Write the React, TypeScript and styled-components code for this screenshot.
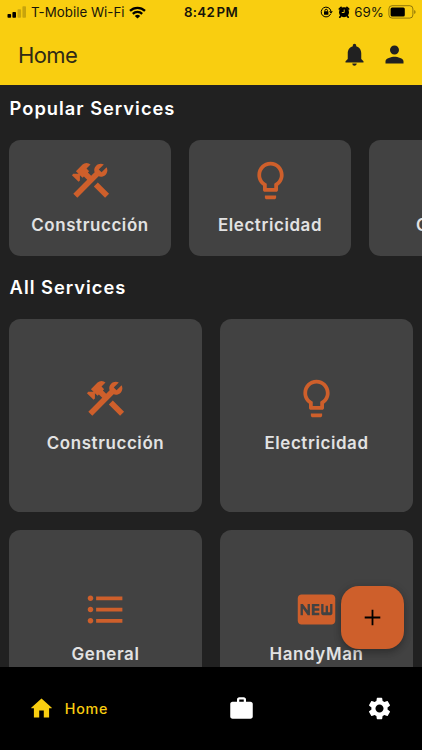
import React from "react";
import styled, { createGlobalStyle } from "styled-components";
import {
  MdConstruction,
  MdFiberNew,
  MdFormatListBulleted,
  MdLightbulbOutline,
  MdNotifications,
  MdPerson,
  MdSettings,
  MdWork,
} from "react-icons/md";
import type { IconType } from "react-icons";

const color = {
  yellow: "#f9ce10",
  ink: "#212121",
  card: "#424242",
  orange: "#ce5f2b",
  label: "#e2e2e2",
};

const GlobalStyle = createGlobalStyle`
  * { box-sizing: border-box; }
  body { margin: 0; background: #000; font-family: Inter, "Liberation Sans", sans-serif; }
  svg { display: block; flex: none; }
`;

const Screen = styled.div`
  position: relative;
  width: 422px;
  height: 750px;
  display: flex;
  flex-direction: column;
  overflow: hidden;
  background: ${color.ink};
`;

const Header = styled.header`
  height: 85.4px;
  flex: none;
  background: ${color.yellow};
`;

const StatusBar = styled.div`
  height: 24px;
  display: grid;
  grid-template-columns: 1fr auto 1fr;
  align-items: center;
  padding: 0 6px 0 7px;
  color: #17150a;
  font-size: 13.3px;
  line-height: 24px;
`;

const StatusGroup = styled.div<{ $end?: boolean }>`
  display: flex;
  align-items: center;
  justify-content: ${(p) => (p.$end ? "flex-end" : "flex-start")};
  gap: ${(p) => (p.$end ? "5px" : "4.5px")};
  white-space: nowrap;
`;

const Carrier = styled.span`
  letter-spacing: 0.03px;
  margin-left: -0.6px;
`;

const Clock = styled.span`
  font-weight: 600;
  letter-spacing: 0.25px;
  word-spacing: -2px;
  margin-right: 1px;
`;

const Percent = styled.span`
  letter-spacing: 0.1px;
  margin: 0 -1px 0 -0.5px;
`;

const TitleBar = styled.div`
  display: flex;
  align-items: center;
  height: 61px;
  padding: 0 13.6px 0 18px;
  gap: 13.5px;
  color: ${color.ink};
`;

const Title = styled.h1`
  flex: 1;
  margin: 0;
  font-size: 22px;
  font-weight: 400;
  letter-spacing: -0.6px;
  color: #302a16;
`;

const Content = styled.main`
  height: 581.6px;
  flex: none;
  overflow: hidden;
  padding: 9.5px 9px 0;
`;

const SectionTitle = styled.h2`
  margin: 0;
  height: 27px;
  line-height: 27px;
  font-size: 18.3px;
  font-weight: 600;
  letter-spacing: 1px;
  color: #fff;
  padding-left: 0.6px;
`;

const PopularRow = styled.div`
  display: flex;
  gap: 18px;
  margin: 18px -9px 18px 0;
  overflow: hidden;
`;

const ServiceGrid = styled.div`
  display: grid;
  grid-template-columns: 1fr 1fr;
  gap: 18px;
  margin: 18px 0 0;
`;

const Card = styled.article<{ $compact?: boolean }>`
  flex: none;
  width: ${(p) => (p.$compact ? "162px" : "auto")};
  height: ${(p) => (p.$compact ? "116.6px" : "192.8px")};
  display: flex;
  flex-direction: column;
  align-items: center;
  justify-content: center;
  gap: 9px;
  padding-top: 1px;
  border-radius: 11.5px;
  background: ${color.card};
  color: ${color.orange};
`;

const CardLabel = styled.span`
  height: 27px;
  line-height: 27px;
  font-size: 16.9px;
  font-weight: 600;
  letter-spacing: 0.62px;
  color: ${color.label};
`;

const AddButton = styled.button`
  position: absolute;
  right: 18px;
  bottom: 101px;
  width: 63px;
  height: 63px;
  padding: 0;
  display: grid;
  place-items: center;
  border: 0;
  border-radius: 18px;
  color: #000;
  background: ${color.orange};
  box-shadow: 0 4px 7px rgba(0, 0, 0, 0.22), 0 1px 10px rgba(0, 0, 0, 0.12);
`;

const NavBar = styled.nav`
  height: 83px;
  flex: none;
  display: grid;
  grid-template-columns: 197.3px 1fr auto;
  align-items: center;
  padding: 0 28.6px 0.6px 31px;
  background: #000;
  color: #fff;
`;

const NavItem = styled.a<{ $active?: boolean }>`
  display: flex;
  align-items: center;
  gap: 12.8px;
  font-size: 14.3px;
  font-weight: 500;
  letter-spacing: 0.7px;
  color: ${(p) => (p.$active ? color.yellow : "#fff")};
`;

const SignalIcon = () => (
  <svg width="20" height="12" viewBox="0 0 20 12" fill="#000">
    <rect x="0.5" y="8" width="3.6" height="3.8" rx="0.8" />
    <rect x="5.4" y="6" width="3.6" height="5.8" rx="0.8" />
    <rect x="10.5" y="3.2" width="3.6" height="8.6" rx="0.8" opacity="0.2" />
    <rect x="15.4" y="0.3" width="3.6" height="11.5" rx="0.8" opacity="0.2" />
  </svg>
);

const WifiIcon = () => (
  <svg width="17" height="13" viewBox="0 0 17 13" fill="none" stroke="#000" strokeWidth="2.3">
    <path d="M1 4.9a10.8 10.8 0 0 1 15 0" />
    <path d="M3.8 7.8a6.8 6.8 0 0 1 9.4 0" />
    <path d="M8.5 12.6 5.8 9.9a4 4 0 0 1 5.4 0z" fill="#000" stroke="none" />
  </svg>
);

const RotationLockIcon = () => (
  <svg width="13" height="12" viewBox="0 0 13 12" fill="none" stroke="#000" strokeWidth="1">
    <path d="M10.6 8A4.9 4.9 0 1 1 10.9 5" />
    <path d="M9 5.2h3.8L11 7.8z" fill="#000" stroke="none" />
    <rect x="4" y="5.3" width="4.4" height="3.4" rx="0.5" fill="#000" stroke="none" />
    <path d="M4.9 5.5V4.6a1.3 1.3 0 0 1 2.6 0v.9" />
  </svg>
);

const AlarmIcon = () => (
  <svg width="12" height="12" viewBox="0 0 12 12">
    <circle cx="6" cy="6.3" r="5" />
    <path d="M1.3 3 3.1 1.3M10.7 3 8.9 1.3M2.8 9.8 1.8 11.2M9.2 9.8l1 1.4" stroke="#000" strokeWidth="1.7" strokeLinecap="round" />
    <path d="M6.2 3.5v3H3.8" fill="none" stroke={color.yellow} strokeWidth="0.9" />
  </svg>
);

const BatteryIcon = () => (
  <svg width="28" height="14" viewBox="0 0 28 14">
    <rect x="0.9" y="0.7" width="24" height="12.4" rx="3.2" fill="none" stroke="#000" strokeOpacity="0.42" />
    <rect x="2.6" y="2.4" width="14.2" height="9" rx="1.5" />
    <path d="M26.2 5v4q1.4-.7 1.4-2t-1.4-2z" opacity="0.42" />
  </svg>
);

const HouseIcon = () => (
  <svg width="21" height="20" viewBox="0 0 21 20" fill="currentColor">
    <path d="M10.5.6.2 9.8v.5h2.7v9.2h5.3v-7.1h4.6v7.1h5.3v-9.2h2.7v-.5z" />
  </svg>
);

const PlusIcon = () => (
  <svg width="17" height="17" viewBox="0 0 17 17" stroke="currentColor" strokeWidth="1.8">
    <path d="M8.5.7v15.6M.7 8.5h15.6" />
  </svg>
);

type Service = { name: string; icon: IconType };

const services: Service[] = [
  { name: "Construcción", icon: MdConstruction },
  { name: "Electricidad", icon: MdLightbulbOutline },
  { name: "General", icon: MdFormatListBulleted },
  { name: "HandyMan", icon: MdFiberNew },
];

const ServiceCard = ({ service, compact }: { service: Service; compact?: boolean }) => {
  const Icon = service.icon;
  return (
    <Card $compact={compact}>
      <Icon size={45} />
      <CardLabel>{service.name}</CardLabel>
    </Card>
  );
};

export default function App() {
  return (
    <>
      <GlobalStyle />
      <Screen>
        <Header>
          <StatusBar>
            <StatusGroup>
              <SignalIcon />
              <Carrier>T-Mobile Wi-Fi</Carrier>
              <WifiIcon />
            </StatusGroup>
            <Clock>8:42 PM</Clock>
            <StatusGroup $end>
              <RotationLockIcon />
              <AlarmIcon />
              <Percent>69%</Percent>
              <BatteryIcon />
            </StatusGroup>
          </StatusBar>
          <TitleBar>
            <Title>Home</Title>
            <MdNotifications size={27} />
            <MdPerson size={27} />
          </TitleBar>
        </Header>
        <Content>
          <SectionTitle>Popular Services</SectionTitle>
          <PopularRow>
            {services.slice(0, 3).map((s) => (
              <ServiceCard key={s.name} service={s} compact />
            ))}
          </PopularRow>
          <SectionTitle>All Services</SectionTitle>
          <ServiceGrid>
            {services.map((s) => (
              <ServiceCard key={s.name} service={s} />
            ))}
          </ServiceGrid>
        </Content>
        <NavBar>
          <NavItem $active>
            <HouseIcon />
            Home
          </NavItem>
          <NavItem>
            <MdWork size={27} />
          </NavItem>
          <NavItem>
            <MdSettings size={27} />
          </NavItem>
        </NavBar>
        <AddButton aria-label="Add">
          <PlusIcon />
        </AddButton>
      </Screen>
    </>
  );
}
